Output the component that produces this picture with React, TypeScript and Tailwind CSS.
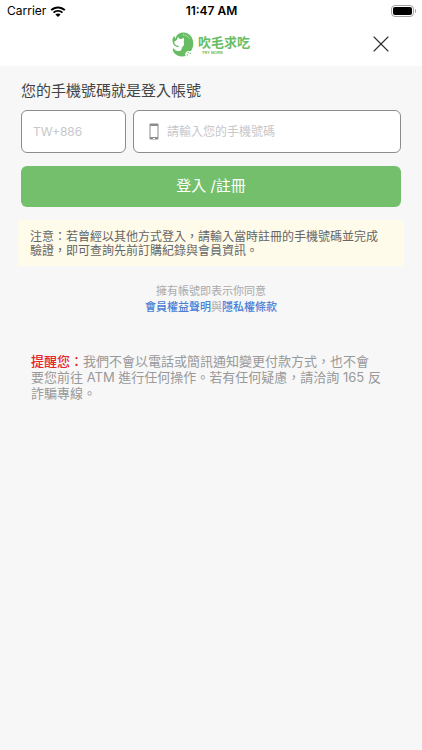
import { X } from 'lucide-react';

function StatusBar() {
  return (
    <div className="grid h-[22px] grid-cols-3 items-center pl-[7px] pr-[6px] text-black">
      <div className="flex items-center gap-1">
        <span className="text-[12px]">Carrier</span>
        <svg className="h-[11px] w-4" viewBox="0 0 32 22" aria-hidden="true">
          <path d="M16 1C10.500 1 5 3 1 7l2.700 2.700C7 6.500 11.500 4.800 16 4.800s9 1.700 12.300 4.900L31 7C27 3 21.500 1 16 1z" />
          <path d="M16 8c-4 0-7.500 1.500-10.200 4l2.700 2.700c2-1.900 4.700-3 7.500-3s5.500 1.100 7.500 3l2.700-2.700C23.500 9.500 20 8 16 8z" />
          <path d="M16 15c-2 0-3.800.7-5.200 2l5.200 5 5.200-5c-1.400-1.300-3.200-2-5.200-2z" />
        </svg>
      </div>
      <span className="text-center text-[12px] font-semibold">11:47 AM</span>
      <div className="flex items-center justify-end gap-px">
        <div className="h-[12px] w-[23px] rounded-[4px] border border-[#a3a3a3] p-px">
          <div className="h-full rounded-[2px] bg-black" />
        </div>
        <div className="h-1 w-px rounded-r bg-[#a3a3a3]" />
      </div>
    </div>
  );
}

function Logo() {
  return (
    <a href="#" className="flex items-center gap-1 text-[#67bd63]" aria-label="吹毛求吃">
      <svg className="h-[25px] w-[22px]" viewBox="0 0 66 75" aria-hidden="true">
        <path
          d="M20 5C34-2 52 2 60 17c6 13 5 29-3 40-4 1-8-1-11 1-5 3-9 8-5 14-14 4-31-1-37-13-2-4-2-8-1-11 4 5 10 7 17 6 6-1 9-5 8-10-8 3-18 1-23-6C-1 28 1 16 7 12l3 8c2-7 5-12 10-15z"
          fill="currentColor"
        />
        <path
          d="M7 29l8-6 3-8 5 6h6l6-4c2 5 1 9 0 13 3 6 1 11-4 15-2 4-1 8-6 11-5 2-12 1-18-3 8-1 13-5 14-11-6 0-12-3-14-8z"
          fill="#fff"
        />
        <path d="M33 8c8 1 15 5 20 12" stroke="#fff" strokeWidth="2" strokeDasharray="3 2" fill="none" />
        <circle cx="49" cy="62" r="2" fill="currentColor" />
        <circle cx="46" cy="69" r="2" fill="currentColor" />
        <circle cx="55" cy="64" r="2" fill="currentColor" />
      </svg>
      <span className="flex flex-col pt-px">
        <span className="text-[13px] leading-[16px] font-bold">吹毛求吃</span>
        <span className="pl-1 font-['Liberation_Sans',sans-serif] text-[4px] leading-[6px] font-bold">TRY MORE</span>
      </span>
    </a>
  );
}

export default function App() {
  return (
    <div className="min-h-screen bg-[#f7f7f7] font-['Inter','Noto_Sans_CJK_TC',sans-serif]">
      <header className="bg-white">
        <StatusBar />
        <div className="grid h-11 grid-cols-[1fr_auto_1fr] items-center">
          <div />
          <Logo />
          <button type="button" aria-label="關閉" className="mr-[27px] justify-self-end text-[#333]">
            <X className="size-7" strokeWidth={1} />
          </button>
        </div>
      </header>

      <main className="px-[21px] pt-[15px]">
        <form>
          <h1 className="text-[15px] leading-5 text-[#444]">您的手機號碼就是登入帳號</h1>
          <div className="mt-[9px] flex gap-[7px]">
            <input
              type="text"
              aria-label="國碼"
              placeholder="TW+886"
              className="h-[43px] w-[105px] rounded-md border border-[#8c8c8c] bg-white px-[11px] text-[12px] placeholder:text-[#c7c7cc]"
            />
            <label className="flex h-[43px] min-w-0 flex-1 items-center gap-2 rounded-md border border-[#8c8c8c] bg-white pl-[15px] pr-3">
              <svg className="h-[17px] w-[10px] shrink-0" viewBox="0 0 10 17" aria-hidden="true">
                <rect x=".5" y=".5" width="9" height="16" rx="1" fill="#8c8c8c" />
                <rect x="1.500" y="3" width="7" height="11" fill="#fff" />
                <rect x="4" y="15" width="2" height="1" fill="#fff" />
              </svg>
              <input
                type="tel"
                aria-label="手機號碼"
                placeholder="請輸入您的手機號碼"
                className="h-full min-w-0 flex-1 text-[12px] outline-none placeholder:text-[#c7c7cc]"
              />
            </label>
          </div>
          <button type="submit" className="mt-[13px] h-[41px] w-full rounded-md bg-[#73bf6b] text-[15px] text-white">
            登入 /註冊
          </button>
        </form>

        <p className="-mx-[3px] mt-[13px] bg-[#fffbea] px-3 pt-[10px] pb-2 text-[12px] leading-[14px] text-[#666]">
          注意：若曾經以其他方式登入，請輸入當時註冊的手機號碼並完成
          <br />
          驗證，即可查詢先前訂購紀錄與會員資訊。
        </p>

        <div className="mt-[17px] text-center text-[11px] leading-4 text-[#aaa]">
          <p>擁有帳號即表示你同意</p>
          <p>
            <a href="#" className="font-medium text-[#4a7fd6]">會員權益聲明</a>
            與
            <a href="#" className="font-medium text-[#4a7fd6]">隱私權條款</a>
          </p>
        </div>

        <p className="mt-[38px] px-[10px] text-[13px] leading-4 text-[#999]">
          <span className="font-medium text-[#e5252a]">提醒您：</span>
          我們不會以電話或簡訊通知變更付款方式，也不會
          <br />
          要您前往 ATM 進行任何操作。若有任何疑慮，請洽詢 165 反
          <br />
          詐騙專線。
        </p>
      </main>
    </div>
  );
}
